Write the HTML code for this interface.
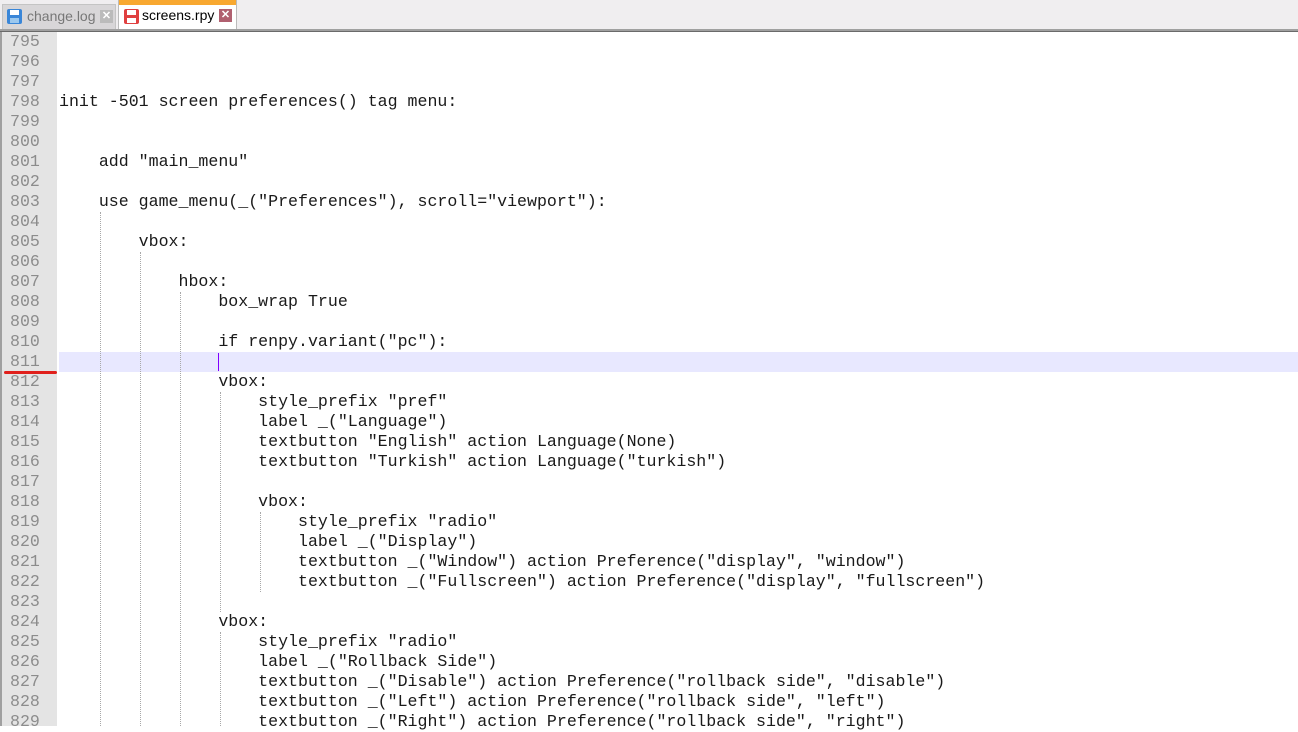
<!DOCTYPE html>
<html><head><meta charset="utf-8"><style>
*{margin:0;padding:0;box-sizing:border-box}
body{width:1298px;height:726px;overflow:hidden;background:#fff;position:relative;font-family:"Liberation Sans",sans-serif}
#tabs{position:absolute;left:0;top:0;width:1298px;height:29px;background:#f0eef0}
#tb{position:absolute;left:0;top:29px;width:1298px;height:3px;background:#a0a0a0;border-bottom:1px solid #6a6a6a}
.tab{position:absolute;top:4px;height:25px;font-size:14px;line-height:25px}
.t1{left:2px;width:114px;background:#d8d6d8;color:#777;border:1px solid #c4c4c4;border-bottom:none}
.t2{left:118px;top:0;height:30px;width:119px;background:#fff;color:#000;border-left:1px solid #bbb;border-right:1px solid #bbb}
.t2 .bar{position:absolute;left:0;top:0;width:100%;height:5px;background:#f8a830}
.ic{position:absolute;width:15px;height:15px;border-radius:2px}
.ic i{position:absolute;left:3px;top:1px;width:9px;height:5px;background:#fff}
.ic b{position:absolute;left:3px;top:9px;width:9px;height:5px;background:#fff}
.x{position:absolute;width:13px;height:13px;color:#fff;font-size:11px;line-height:13px;text-align:center;font-weight:bold}
#gut{position:absolute;left:0;top:32px;width:57px;height:694px;background:#e4e4e4;border-left:2px solid #a0a0a0}
.ln{position:absolute;left:10px;font-family:"Liberation Mono",monospace;font-size:16.6px;color:#8c8c8c;height:20px;line-height:20px}
.cd{position:absolute;left:59px;font-family:"Liberation Mono",monospace;font-size:16.6px;color:#1a1a1a;height:20px;line-height:20px;white-space:pre}
.g{position:absolute;width:0;border-left:1px dotted #a8a8a8}
</style></head><body>
<div id="tabs">
<div class="tab t1"><div class="ic" style="left:4px;top:4px;background:#3a86d8"><i></i><b style="background:#9cc8ee"></b></div><span style="position:absolute;left:24px;top:-1px">change.log</span><div class="x" style="left:97px;top:5px;background:#bbb">✕</div></div>
<div class="tab t2"><div class="bar"></div><div class="ic" style="left:5px;top:9px;background:#e04040"><i></i><b></b></div><span style="position:absolute;left:23px;top:3px">screens.rpy</span><div class="x" style="left:100px;top:9px;background:#b06070">✕</div></div>
</div>
<div id="tb"></div>
<div id="gut"></div>
<div style="position:absolute;left:59px;top:352px;width:1239px;height:20px;background:#e8e8ff"></div>
<div style="position:absolute;left:218px;top:353px;width:1px;height:18px;background:#8000ff"></div>
<div style="position:absolute;left:4px;top:371px;width:53px;height:3px;background:#e0201c;border-radius:2px"></div>
<div class="g" style="left:100px;top:212px;height:514px"></div>
<div class="g" style="left:140px;top:252px;height:474px"></div>
<div class="g" style="left:180px;top:292px;height:434px"></div>
<div class="g" style="left:220px;top:392px;height:220px"></div>
<div class="g" style="left:260px;top:512px;height:80px"></div>
<div class="g" style="left:220px;top:632px;height:94px"></div>
<div class="ln" style="top:32px">795</div>
<div class="ln" style="top:52px">796</div>
<div class="ln" style="top:72px">797</div>
<div class="ln" style="top:92px">798</div><div class="cd" style="top:92px">init -501 screen preferences() tag menu:</div>
<div class="ln" style="top:112px">799</div>
<div class="ln" style="top:132px">800</div>
<div class="ln" style="top:152px">801</div><div class="cd" style="top:152px">    add "main_menu"</div>
<div class="ln" style="top:172px">802</div>
<div class="ln" style="top:192px">803</div><div class="cd" style="top:192px">    use game_menu(_("Preferences"), scroll="viewport"):</div>
<div class="ln" style="top:212px">804</div>
<div class="ln" style="top:232px">805</div><div class="cd" style="top:232px">        vbox:</div>
<div class="ln" style="top:252px">806</div>
<div class="ln" style="top:272px">807</div><div class="cd" style="top:272px">            hbox:</div>
<div class="ln" style="top:292px">808</div><div class="cd" style="top:292px">                box_wrap True</div>
<div class="ln" style="top:312px">809</div>
<div class="ln" style="top:332px">810</div><div class="cd" style="top:332px">                if renpy.variant("pc"):</div>
<div class="ln" style="top:352px">811</div>
<div class="ln" style="top:372px">812</div><div class="cd" style="top:372px">                vbox:</div>
<div class="ln" style="top:392px">813</div><div class="cd" style="top:392px">                    style_prefix "pref"</div>
<div class="ln" style="top:412px">814</div><div class="cd" style="top:412px">                    label _("Language")</div>
<div class="ln" style="top:432px">815</div><div class="cd" style="top:432px">                    textbutton "English" action Language(None)</div>
<div class="ln" style="top:452px">816</div><div class="cd" style="top:452px">                    textbutton "Turkish" action Language("turkish")</div>
<div class="ln" style="top:472px">817</div>
<div class="ln" style="top:492px">818</div><div class="cd" style="top:492px">                    vbox:</div>
<div class="ln" style="top:512px">819</div><div class="cd" style="top:512px">                        style_prefix "radio"</div>
<div class="ln" style="top:532px">820</div><div class="cd" style="top:532px">                        label _("Display")</div>
<div class="ln" style="top:552px">821</div><div class="cd" style="top:552px">                        textbutton _("Window") action Preference("display", "window")</div>
<div class="ln" style="top:572px">822</div><div class="cd" style="top:572px">                        textbutton _("Fullscreen") action Preference("display", "fullscreen")</div>
<div class="ln" style="top:592px">823</div>
<div class="ln" style="top:612px">824</div><div class="cd" style="top:612px">                vbox:</div>
<div class="ln" style="top:632px">825</div><div class="cd" style="top:632px">                    style_prefix "radio"</div>
<div class="ln" style="top:652px">826</div><div class="cd" style="top:652px">                    label _("Rollback Side")</div>
<div class="ln" style="top:672px">827</div><div class="cd" style="top:672px">                    textbutton _("Disable") action Preference("rollback side", "disable")</div>
<div class="ln" style="top:692px">828</div><div class="cd" style="top:692px">                    textbutton _("Left") action Preference("rollback side", "left")</div>
<div class="ln" style="top:712px">829</div><div class="cd" style="top:712px">                    textbutton _("Right") action Preference("rollback side", "right")</div>
</body></html>
